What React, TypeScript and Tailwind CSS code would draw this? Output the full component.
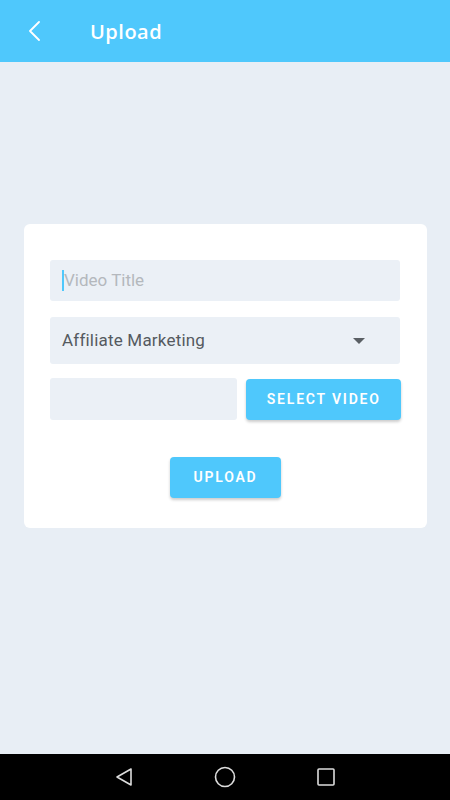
const font = { fontFamily: 'Roboto, "Liberation Sans", sans-serif' };

function Header() {
  return (
    <div className="h-[62px] bg-[#4fc8fc] flex items-center shrink-0">
      <svg className="ml-[27px] w-[14px] h-[20px]" viewBox="0 0 14 20" fill="none">
        <path d="M12 1 L3 10 L12 19" stroke="white" strokeWidth="1.8" strokeLinecap="round" strokeLinejoin="round" />
      </svg>
      <span className="ml-[49px] mt-[1px] text-[20px] text-white tracking-[0.5px] font-['Open_Sans',sans-serif] font-semibold">
        Upload
      </span>
    </div>
  );
}

function NavBar() {
  return (
    <div className="h-[46px] bg-black flex items-center justify-center gap-[80px] shrink-0">
      <svg className="w-[20px] h-[20px]" viewBox="0 0 20 20" fill="none">
        <path d="M17 2 L17 18 L3 10 Z" stroke="#ddd" strokeWidth="1.6" strokeLinejoin="round" />
      </svg>
      <svg className="w-[22px] h-[22px]" viewBox="0 0 22 22" fill="none">
        <circle cx="11" cy="11" r="9.5" stroke="#ddd" strokeWidth="1.6" />
      </svg>
      <svg className="w-[20px] h-[20px]" viewBox="0 0 20 20" fill="none">
        <rect x="2" y="2" width="16" height="16" rx="1" stroke="#ddd" strokeWidth="1.6" />
      </svg>
    </div>
  );
}

export default function App() {
  return (
    <div className="w-[450px] h-[800px] flex flex-col bg-[#e8eef5]" style={font}>
      <Header />
      <div className="flex-1 px-[24px] pt-[162px]">
        <div className="w-[403px] bg-white rounded-[6px] pt-[36px] pb-[30px] px-[26px] flex flex-col">
          <div className="h-[41px] w-[350px] bg-[#ebf0f6] rounded-[3px] flex items-center pl-[12px]">
            <div className="w-[2px] h-[21px] bg-[#4fc8fc]" />
            <span className="text-[17px] text-[#b4b8bd]">Video Title</span>
          </div>
          <div className="mt-[16px] h-[47px] w-[350px] bg-[#ebf0f6] rounded-[3px] flex items-center justify-between pl-[12px] pr-[35px]">
            <span className="text-[17px] text-[#555a5f] tracking-[0.2px]">Affiliate Marketing</span>
            <svg className="w-[12px] h-[6px]" viewBox="0 0 12 6">
              <path d="M0 0 L12 0 L6 6 Z" fill="#5a5f64" />
            </svg>
          </div>
          <div className="mt-[14px] flex items-center gap-[9px]">
            <div className="h-[42px] w-[188px] bg-[#ebf0f6] rounded-[3px]" />
            <button className="h-[41px] w-[155px] bg-[#4fc8fc] rounded-[4px] text-white text-[14px] font-semibold tracking-[1.8px] shadow-[0_2px_3px_rgba(0,0,0,0.2)]">
              SELECT VIDEO
            </button>
          </div>
          <div className="mt-[37px] flex justify-center">
            <button className="h-[41px] w-[111px] bg-[#4fc8fc] rounded-[4px] text-white text-[14px] font-semibold tracking-[1.8px] shadow-[0_2px_3px_rgba(0,0,0,0.2)]">
              UPLOAD
            </button>
          </div>
        </div>
      </div>
      <NavBar />
    </div>
  );
}
